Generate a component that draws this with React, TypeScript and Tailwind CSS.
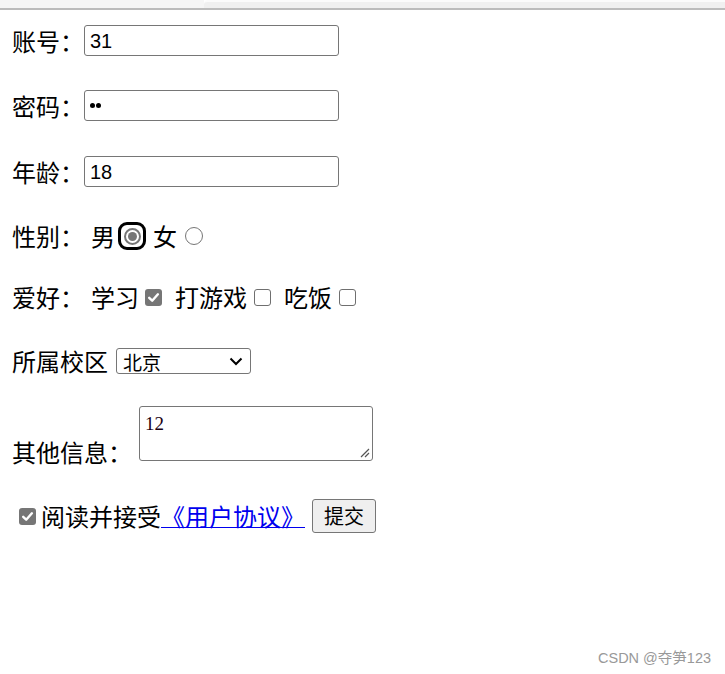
import React from "react";

const cjk = { fontFamily: '"Microsoft YaHei", "Noto Sans CJK SC", sans-serif' };

function CheckOn({ className = "" }: { className?: string }) {
  return (
    <span className={"inline-flex w-[17px] h-[17px] rounded-[3px] bg-[#767676] items-center justify-center shrink-0 " + className}>
      <svg width="13" height="13" viewBox="0 0 13 13">
        <path d="M2.2 6.8 L5.2 9.7 L10.9 3.3" fill="none" stroke="#fff" strokeWidth="2.4" strokeLinecap="round" strokeLinejoin="round" />
      </svg>
    </span>
  );
}

function CheckOff({ className = "" }: { className?: string }) {
  return <span className={"inline-block w-[17px] h-[17px] rounded-[3px] border border-[#6f6f6f] bg-white shrink-0 " + className} />;
}

function Input({ value }: { value: string }) {
  return (
    <div
      className="w-[255px] h-[31px] border border-[#767676] rounded-[3px] flex items-center pl-[5px] text-[20px] text-black"
      style={{ fontFamily: '"Liberation Sans", Arial, sans-serif' }}
    >
      {value}
    </div>
  );
}

export default function App() {
  return (
    <div className="w-[725px] h-[674px] bg-white relative overflow-hidden" style={cjk}>
      <div className="flex h-[8px]">
        <div className="w-[204px] bg-[#f6f6f6]" />
        <div className="flex-1 bg-[#f0f0f0] border-t-2 border-[#fbfbfb] rounded-tl-[4px]" />
      </div>
      <div className="h-[2px] bg-[#bcbcbc]" />

      <div className="pl-[12px] text-[24px] text-black leading-none">
        <div className="mt-[15px] h-[31px] flex items-center">
          <span className="w-[72px]">账号：</span>
          <Input value="31" />
        </div>
        <div className="mt-[34px] h-[31px] flex items-center">
          <span className="w-[72px]">密码：</span>
          <div className="w-[255px] h-[31px] border border-[#767676] rounded-[3px] flex items-center pl-[5px] gap-[1px]">
            <span className="w-[5px] h-[5px] rounded-full bg-black" />
            <span className="w-[5px] h-[5px] rounded-full bg-black" />
          </div>
        </div>
        <div className="mt-[35px] h-[31px] flex items-center">
          <span className="w-[72px]">年龄：</span>
          <Input value="18" />
        </div>

        <div className="mt-[35px] h-[28px] flex items-center">
          <span className="w-[79px]">性别：</span>
          <span>男</span>
          <span className="ml-[3px] w-[28px] h-[28px] rounded-[9px] border-[3px] border-black bg-white flex items-center justify-center">
            <span className="w-[17px] h-[17px] rounded-full border-2 border-[#767676] flex items-center justify-center">
              <span className="w-[9px] h-[9px] rounded-full bg-[#767676]" />
            </span>
          </span>
          <span className="ml-[7px]">女</span>
          <span className="ml-[8px] w-[18px] h-[18px] rounded-full border border-[#767676] bg-white" />
        </div>

        <div className="mt-[33px] h-[28px] flex items-center">
          <span className="w-[79px]">爱好：</span>
          <span>学习</span>
          <CheckOn className="ml-[6px]" />
          <span className="ml-[13px]">打游戏</span>
          <CheckOff className="ml-[7px]" />
          <span className="ml-[13px]">吃饭</span>
          <CheckOff className="ml-[7px]" />
        </div>

        <div className="mt-[37px] h-[26px] flex items-center">
          <span>所属校区</span>
          <div className="ml-[8px] w-[135px] h-[26px] border border-[#767676] rounded-[3px] flex items-center justify-between pl-[6px] pr-[7px] text-[19px]">
            <span>北京</span>
            <svg width="14" height="9" viewBox="0 0 14 9">
              <path d="M1.5 1.5 L7 7 L12.5 1.5" fill="none" stroke="#000" strokeWidth="2" />
            </svg>
          </div>
        </div>

        <div className="mt-[32px] flex items-end">
          <span className="w-[127px] mb-[-3px]">其他信息：</span>
          <div className="relative w-[234px] h-[55px] border border-[#767676] rounded-[3px] pl-[5px] pt-[1px]">
            <span className="text-[19px] text-[#1a0010]" style={{ fontFamily: '"Liberation Serif", serif' }}>12</span>
            <svg className="absolute right-[2px] bottom-[2px]" width="11" height="11" viewBox="0 0 11 11">
              <path d="M10 2 L2 10 M10 6 L6 10" stroke="#555" strokeWidth="1.2" />
            </svg>
          </div>
        </div>

        <div className="mt-[38px] h-[34px] flex items-center">
          <CheckOn className="ml-[7px]" />
          <span className="ml-[5px]">阅读并接受</span>
          <a className="text-[#0000ee] underline underline-offset-[1px] decoration-1 decoration-[#0000ee]">《用户协议》</a>
          <button className="ml-[7px] w-[64px] h-[34px] bg-[#efefef] border border-[#767676] rounded-[3px] text-[20px] text-black flex items-center justify-center">
            提交
          </button>
        </div>
      </div>

      <div className="absolute left-[598px] top-[648px] text-[14.5px] text-[#999]" style={{ fontFamily: '"Liberation Sans", "Noto Sans CJK SC", sans-serif' }}>
        CSDN @夺笋123
      </div>
    </div>
  );
}
